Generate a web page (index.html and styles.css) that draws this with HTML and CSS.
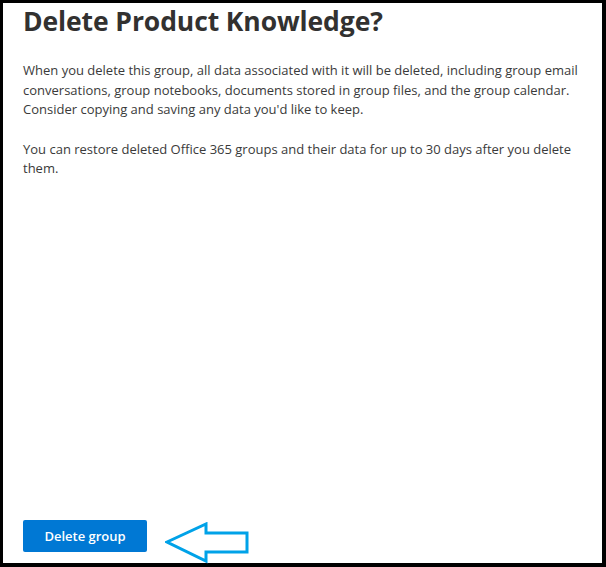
FILE: index.html
```html
<!DOCTYPE html>
<html>
<head>
<meta charset="utf-8">
<link rel="stylesheet" href="styles.css">
</head>
<body>
<div class="panel">
  <h1 class="title">Delete Product Knowledge?</h1>
  <p class="text">When you delete this group, all data associated with it will be deleted, including group email conversations, group notebooks, documents stored in group files, and the group calendar. Consider copying and saving any data you'd like to keep.</p>
  <p class="text">You can restore deleted Office 365 groups and their data for up to 30 days after you delete them.</p>
  <div class="footer">
    <button class="primary">Delete group</button>
  </div>
  <svg class="arrow" width="90" height="44" viewBox="0 0 90 44">
    <polygon points="2,20 41,2 41,11 82,11 82,30 41,30 41,39" fill="none" stroke="#00a2e8" stroke-width="3" stroke-linejoin="miter"/>
  </svg>
</div>
</body>
</html>
```
FILE: styles.css
```css
html, body {
  margin: 0;
  padding: 0;
  width: 606px;
  height: 567px;
  overflow: hidden;
  background: #000;
}
.panel {
  position: relative;
  box-sizing: border-box;
  width: 606px;
  height: 567px;
  border-style: solid;
  border-color: #000;
  border-width: 3px 4px 4px 3px;
  background: #fff;
  padding: 0 20px 11px 20px;
  display: flex;
  flex-direction: column;
  font-family: "Open Sans", sans-serif;
  color: #333;
}
.title {
  margin: 0;
  font-size: 26.5px;
  line-height: 36px;
  font-weight: 700;
  color: #323130;
  letter-spacing: -0.1px;
}
.text {
  margin: 20px 0 0 0;
  font-size: 13px;
  line-height: 19.5px;
  color: #3a3a3a;
  width: 562px;
}
.title + .text {
  margin-top: 22px;
}
.footer {
  margin-top: auto;
  display: flex;
}
.primary {
  height: 32px;
  width: 124px;
  border: none;
  border-radius: 2px;
  background: #0078d4;
  color: #fff;
  font-family: "Open Sans", sans-serif;
  font-size: 13px;
  font-weight: 600;
  padding: 0;
}
.arrow {
  position: absolute;
  left: 162px;
  top: 519px;
}
```
